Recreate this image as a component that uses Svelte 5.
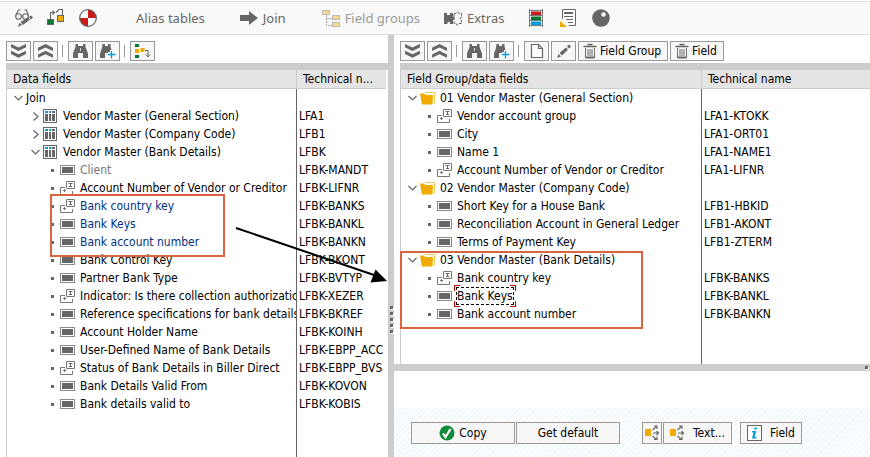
<script>
  const left = [
    { level: 0, kind: 'root', open: true, text: 'Join', tech: '' },
    { level: 1, kind: 'table', open: false, text: 'Vendor Master (General Section)', tech: 'LFA1' },
    { level: 1, kind: 'table', open: false, text: 'Vendor Master (Company Code)', tech: 'LFB1' },
    { level: 1, kind: 'table', open: true, text: 'Vendor Master (Bank Details)', tech: 'LFBK' },
    { level: 2, kind: 'field', text: 'Client', tech: 'LFBK-MANDT', tone: 'muted' },
    { level: 2, kind: 'texted', text: 'Account Number of Vendor or Creditor', tech: 'LFBK-LIFNR' },
    { level: 2, kind: 'texted', text: 'Bank country key', tech: 'LFBK-BANKS', tone: 'used' },
    { level: 2, kind: 'field', text: 'Bank Keys', tech: 'LFBK-BANKL', tone: 'used' },
    { level: 2, kind: 'field', text: 'Bank account number', tech: 'LFBK-BANKN', tone: 'used' },
    { level: 2, kind: 'field', text: 'Bank Control Key', tech: 'LFBK-BKONT' },
    { level: 2, kind: 'field', text: 'Partner Bank Type', tech: 'LFBK-BVTYP' },
    { level: 2, kind: 'texted', text: 'Indicator: Is there collection authorization', tech: 'LFBK-XEZER' },
    { level: 2, kind: 'field', text: 'Reference specifications for bank details', tech: 'LFBK-BKREF' },
    { level: 2, kind: 'field', text: 'Account Holder Name', tech: 'LFBK-KOINH' },
    { level: 2, kind: 'field', text: 'User-Defined Name of Bank Details', tech: 'LFBK-EBPP_ACC' },
    { level: 2, kind: 'texted', text: 'Status of Bank Details in Biller Direct', tech: 'LFBK-EBPP_BVS' },
    { level: 2, kind: 'field', text: 'Bank Details Valid From', tech: 'LFBK-KOVON' },
    { level: 2, kind: 'field', text: 'Bank details valid to', tech: 'LFBK-KOBIS' }
  ];

  const right = [
    { level: 0, kind: 'folder', open: true, text: '01 Vendor Master (General Section)', tech: '' },
    { level: 1, kind: 'texted', text: 'Vendor account group', tech: 'LFA1-KTOKK' },
    { level: 1, kind: 'field', text: 'City', tech: 'LFA1-ORT01' },
    { level: 1, kind: 'field', text: 'Name 1', tech: 'LFA1-NAME1' },
    { level: 1, kind: 'texted', text: 'Account Number of Vendor or Creditor', tech: 'LFA1-LIFNR' },
    { level: 0, kind: 'folder', open: true, text: '02 Vendor Master (Company Code)', tech: '' },
    { level: 1, kind: 'field', text: 'Short Key for a House Bank', tech: 'LFB1-HBKID' },
    { level: 1, kind: 'field', text: 'Reconciliation Account in General Ledger', tech: 'LFB1-AKONT' },
    { level: 1, kind: 'field', text: 'Terms of Payment Key', tech: 'LFB1-ZTERM' },
    { level: 0, kind: 'folder', open: true, text: '03 Vendor Master (Bank Details)', tech: '' },
    { level: 1, kind: 'texted', text: 'Bank country key', tech: 'LFBK-BANKS' },
    { level: 1, kind: 'field', text: 'Bank Keys', tech: 'LFBK-BANKL', focused: true },
    { level: 1, kind: 'field', text: 'Bank account number', tech: 'LFBK-BANKN' }
  ];
</script>

{#snippet expandIcon()}
  <svg width="17" height="14" viewBox="0 0 17 14"><path d="M1 0l7.5 3.5L16 0v3.2L8.500 7 1 3.200zM1 6.800l7.500 3.500L16 6.800V10l-7.500 3.800L1 10z" fill="#666" /></svg>
{/snippet}

{#snippet collapseIcon()}
  <svg width="17" height="14" viewBox="0 0 17 14"><path d="M1 7l7.5-3.500L16 7V3.800L8.500 0 1 3.800zM1 13.800l7.500-3.500 7.500 3.500v-3.200L8.500 6.800 1 10.600z" fill="#666" /></svg>
{/snippet}

{#snippet findIcon(plus)}
  <svg width="17" height="16" viewBox="0 0 17 16">
    {#if plus}
      <path d="M3.500 1H6v2h3V1h2.500v2.500L12.500 7H11v2H9v1H6v5H1v-4.500L3 5z" fill="#666" />
      <path d="M12.500 8v7.500M9 11.500h7.500" stroke="#009de0" stroke-width="1.300" />
    {:else}
      <path d="M3.500 1H6v2h5V1h2.500v3L16 10.500V15h-5v-5H6v5H1v-4.500L3.500 4z" fill="#666" />
      <path d="M8.500 5v3" stroke="#ddd" />
    {/if}
  </svg>
{/snippet}

{#snippet trashIcon()}
  <svg width="14" height="16" viewBox="0 0 14 16"><path d="M4.500 1.500h5M.5 3.500h13" stroke="#666" stroke-width="1.500" /><path d="M2.500 5v9.500h9V5M5 6v7M7 6v7M9 6v7" fill="none" stroke="#777" stroke-width="1.100" /><path d="M3 13.500h8v2H3z" fill="#666" /></svg>
{/snippet}

{#snippet spreadIcon()}
  <svg width="15" height="16" viewBox="0 0 15 16"><path d="M0 4h6v7H0z" fill="#f0ab00" /><path d="M7.500 5l4-3.500M9 1h3v3M8 8h5.500M11.500 6l2 2-2 2M7.500 11l4 3.500M12 11.500v3H9" fill="none" stroke="#666" stroke-width="1.100" /></svg>
{/snippet}

{#snippet nodeIcon(kind)}
  {#if kind === 'folder'}
    <svg width="16" height="14" viewBox="0 0 16 14"><path d="M5 1.500h9.500v11" fill="none" stroke="#f4c657" /><path d="M0 2.500h4L5.500 4H13l-.5 9.500H2z" fill="#f0ab00" /></svg>
  {:else if kind === 'table'}
    <svg width="15" height="14" viewBox="0 0 15 14"><rect x=".5" y=".5" width="13" height="13" fill="#fff" stroke="#666" /><path d="M2 2h3v2H2zM6 2h2v2H6z" fill="#009de0" /><path d="M9 2h3v2H9zM2 5h3v7H2zM6 5h2v7H6zM9 5h3v7H9z" fill="#666" /></svg>
  {:else if kind === 'texted'}
    <svg width="15" height="14" viewBox="0 0 15 14"><path d="M6.500 7.500V.5h8v7z" fill="#fff" stroke="#777" /><path d="M8.500 2.500h4M10.500 2.500v3M9 5.500h3" fill="none" stroke="#666" /><path d="M5 6.500H.5v7h12V10M3 9.500h3M4.500 8v3" fill="none" stroke="#777" /></svg>
  {:else if kind === 'field'}
    <svg width="15" height="10" viewBox="0 0 15 10"><rect x=".5" y=".5" width="14" height="9" fill="#fff" stroke="#888" /><path d="M2 2h11v6H2z" fill="#666" /></svg>
  {/if}
{/snippet}

{#snippet tree(rows, firstHead, secondHead, side)}
  <table class={side}>
    <thead>
      <tr><th class="name">{firstHead}</th><th class="tech">{secondHead}</th></tr>
    </thead>
    <tbody>
      {#each rows as row}
        <tr>
          <td class="name" class:current={row.focused}>
            <div class="node level{row.level} {row.tone ?? ''}">
              {#if row.open !== undefined}
                <svg class="twist" width="9" height="9" viewBox="0 0 9 9"><path d={row.open ? 'M.5 2L4.500 6 8.500 2' : 'M2.500.5L7 4.500 2.500 8.500'} fill="none" stroke="#666" stroke-width="1.200" /></svg>
              {:else}
                <i class="leaf"></i>
              {/if}
              {#if row.kind !== 'root'}
                <span class="pic">{@render nodeIcon(row.kind)}</span>
              {/if}
              <span class="label" class:focused={row.focused}>{row.text}</span>
            </div>
          </td>
          <td class="tech">{row.tech}</td>
        </tr>
      {/each}
      <tr class="rest"><td class="name"></td><td class="tech"></td></tr>
    </tbody>
  </table>
{/snippet}

<div class="app">
  <nav class="menu">
    <div class="icons">
      <button aria-label="Display or change">
        <svg width="20" height="20" viewBox="0 0 20 20"><g fill="none" stroke="#666" stroke-width="1.100"><circle cx="4.500" cy="8.500" r="2.800" /><circle cx="11.500" cy="8.500" r="2.800" /><path d="M7.300 8h1.400M1.700 7.500L4.500 2h2M14.300 7.500L12.500 2h-2" /></g><path d="M4 19l1.500-4.500L8 17zM6.500 14l7.500-4.500 2 2L9 17zM15 9l2-1.500 2 2-2 2z" fill="#666" /></svg>
      </button>
      <button aria-label="Other object">
        <svg width="20" height="20" viewBox="0 0 20 20"><path d="M4.500 11V4.500H8M6.500 2.500l2 2-2 2M10 4.500l3-3M13 1.500h3.500V7" fill="none" stroke="#666" stroke-width="1.100" /><rect x="1.500" y="11.500" width="6" height="5" fill="#007833" stroke="#666" /><rect x="11.500" y="7.500" width="6" height="6" fill="#f0ab00" stroke="#666" /></svg>
      </button>
      <button aria-label="Generate">
        <svg width="20" height="20" viewBox="0 0 20 20"><circle cx="10" cy="10" r="8.500" fill="#fff" /><path d="M10 10V1.500A8.500 8.500 0 0 1 18.500 10zM10 10v8.500A8.500 8.500 0 0 1 1.500 10z" fill="#cc1919" /><circle cx="10" cy="10" r="8.300" fill="none" stroke="#666" stroke-width="1.200" /></svg>
      </button>
    </div>
    <button class="alias">Alias tables</button>
    <button class="join"><svg width="18" height="14" viewBox="0 0 18 14"><path d="M0 4h9V0l9 7-9 7v-4H0z" fill="#666" /></svg>Join</button>
    <button class="groups" disabled>
      <svg width="18" height="18" viewBox="0 0 18 18"><path d="M4.500 6v10.500h6M5 9.500h5" fill="none" stroke="#aaa" stroke-dasharray="2 1" /><g fill="#f8d88c" stroke="#bbb"><rect x=".5" y="1.500" width="7" height="4" /><rect x="10.500" y="6.500" width="7" height="4" /><rect x="10.500" y="13.500" width="7" height="4" /></g></svg>Field groups
    </button>
    <button class="extras">
      <svg width="18" height="18" viewBox="0 0 18 18"><path d="M0 4h3v2h3V4h3v4h1.500v3H9v4H6v-2H3.500v2H0z" fill="#666" /><path d="M10 4.500h2a1.500 1.500 0 1 1 3 0h2.500v4a1.500 1.500 0 1 0 0 3v3H15a1.500 1.500 0 1 1-3 0h-2v-3M10 8V4" fill="none" stroke="#666" stroke-dasharray="3 1" /></svg>Extras
    </button>
    <div class="icons tail">
      <button aria-label="List">
        <svg width="16" height="18" viewBox="0 0 16 18"><path d="M1.500 0v18M14.500 0v18M1 1.500h14M1 6.500h14M1 11.500h14M1 16.500h14" stroke="#777" /><path d="M3 2.500h10V6H3z" fill="#cc1919" /><path d="M3 7.500h10V11H3z" fill="#007833" /><path d="M3 12.500h10V16H3z" fill="#009de0" /></svg>
      </button>
      <button aria-label="Assignment">
        <svg width="16" height="18" viewBox="0 0 16 18"><path d="M2.500 10V.5h13v16H9" fill="#fff" stroke="#666" /><path d="M4 3h9v2H4zM4 7h9v1H4zM6 10h7v1H6zM8 13h5v1H8z" fill="#666" /><path d="M0 12v6h7z" fill="#f0ab00" /></svg>
      </button>
      <button aria-label="Status">
        <svg width="18" height="18" viewBox="0 0 18 18"><circle cx="9" cy="9" r="8.800" fill="#666" /><circle cx="11.500" cy="5.500" r="2.300" fill="#f9f9f9" /></svg>
      </button>
    </div>
  </nav>

  <main>
    <section class="pane">
      <div class="tools">
        <button aria-label="Expand">{@render expandIcon()}</button>
        <button aria-label="Collapse">{@render collapseIcon()}</button>
        <i class="sep"></i>
        <button aria-label="Find">{@render findIcon(false)}</button>
        <button aria-label="Find next">{@render findIcon(true)}</button>
        <i class="sep"></i>
        <button aria-label="Assign fields">
          <svg width="17" height="16" viewBox="0 0 17 16"><path d="M1 1h4v3H1zM1 12h4v3H1z" fill="#007833" /><path d="M1 6h4v4H1zM6.500 5h4v4h-4z" fill="#f0ab00" /><path d="M11 7.500h3V14M11.500 11.500L14 14l2-2.500" fill="none" stroke="#666" /></svg>
        </button>
      </div>
      <div class="tree">{@render tree(left, 'Data fields', 'Technical n...', 'left')}</div>
    </section>

    <div class="splitter"><i></i><i></i><i></i><i></i><i></i></div>

    <section class="pane wide">
      <div class="tools">
        <button aria-label="Expand">{@render expandIcon()}</button>
        <button aria-label="Collapse">{@render collapseIcon()}</button>
        <i class="sep"></i>
        <button aria-label="Find">{@render findIcon(false)}</button>
        <button aria-label="Find next">{@render findIcon(true)}</button>
        <i class="sep"></i>
        <button aria-label="Create">
          <svg width="14" height="16" viewBox="0 0 14 16"><path d="M1.500 1.500h7l4 4v9h-11zM8.500 1.500v4h4" fill="#fff" stroke="#666" stroke-width="1.200" /></svg>
        </button>
        <button aria-label="Change">
          <svg width="16" height="16" viewBox="0 0 16 16"><path d="M1 15l1.500-4L5 13.500zM3.500 10L10 4.500 12 6.500 6 12.500zM11 3.500L13 1.500 15 3.500 13 5.500z" fill="#666" /></svg>
        </button>
        <button class="labelled">{@render trashIcon()}Field Group</button>
        <button class="labelled">{@render trashIcon()}Field</button>
      </div>
      <div class="tree">{@render tree(right, 'Field Group/data fields', 'Technical name', 'right')}</div>
      <div class="bar"><i></i></div>
      <div class="blank"></div>
      <footer>
        <button class="big">
          <svg width="16" height="16" viewBox="0 0 16 16"><circle cx="8" cy="8" r="7.500" fill="#118a3c" /><path d="M4 8.500l2.500 3.500 5-8" fill="none" stroke="#fff" stroke-width="2.200" /></svg>Copy
        </button>
        <button class="big">Get default</button>
        <button class="small" aria-label="Texts">{@render spreadIcon()}</button>
        <button class="text">{@render spreadIcon()}Text...</button>
        <button class="info">
          <svg width="15" height="16" viewBox="0 0 15 16"><rect x=".5" y=".5" width="14" height="15" fill="#fff" stroke="#666" /><path d="M7.500 2.500h2.500l-.5 2H7zM5 6h4.200l-1.500 6H9.500l-.5 1.500H5l1.500-6H5z" fill="#009de0" /></svg>Field
        </button>
      </footer>
    </section>

    <div class="mark source"></div>
    <div class="mark target"></div>
    <svg class="arrow" width="153" height="62" viewBox="0 0 153 62"><path d="M1 3l138 47" stroke="#000" stroke-width="2" /><path d="M152 56l-16.500 1.500 5-13z" fill="#000" /></svg>
  </main>
</div>

<style>
  :global(body) {
    margin: 0;
    background: #fff;
  }
  .app {
    display: flex;
    flex-direction: column;
    height: 100vh;
    overflow: hidden;
    box-sizing: border-box;
    padding-top: 1px;
    font: 12px/18px "DejaVu Sans Condensed", "DejaVu Sans", sans-serif;
    color: #000;
  }
  svg {
    display: block;
    flex: none;
  }
  button {
    font: inherit;
    color: inherit;
    display: flex;
    align-items: center;
    justify-content: center;
    box-sizing: border-box;
    padding: 0;
    white-space: nowrap;
  }

  .menu {
    display: flex;
    align-items: center;
    flex: none;
    height: 32px;
    padding-left: 14px;
    border-top: 1px solid #ddd;
    border-bottom: 1px solid #ddd;
    background: #f9f9f9;
    font-family: "Noto Sans", sans-serif;
    font-size: 13px;
    color: #666;
  }
  .menu button {
    border: 0;
    background: none;
    gap: 5px;
  }
  .icons {
    display: flex;
    gap: 12px;
  }
  .alias { margin-left: 38px; }
  .join { margin-left: 35px; }
  .groups { margin-left: 36px; }
  .menu .groups { color: #999; }
  .extras { margin-left: 24px; }
  .tail {
    gap: 16px;
    margin-left: 24px;
  }

  main {
    position: relative;
    display: flex;
    flex: 1;
    min-height: 0;
  }
  .pane {
    display: flex;
    flex-direction: column;
    flex: 0 0 388px;
    min-width: 0;
  }
  .pane.wide { flex: 1; }

  .tools {
    display: flex;
    align-items: center;
    flex: none;
    gap: 2px;
    height: 20px;
    padding: 6px 0 2px 6px;
  }
  .tools button,
  footer button {
    border: 1px solid #999;
    background: #f7f7f7;
  }
  .tools button {
    width: 25px;
    height: 20px;
  }
  .tools .labelled {
    width: auto;
    padding: 0 6px 0 4px;
    gap: 3px;
  }
  .sep {
    width: 1px;
    height: 12px;
    margin: 0 3px 0 2px;
    background: #999;
  }

  .tree {
    flex: 1;
    min-height: 0;
    margin-left: 6px;
    border-top: 7px solid #ccc;
    overflow: hidden;
  }
  table {
    width: 100%;
    height: 100%;
    table-layout: fixed;
    border-collapse: separate;
    border-spacing: 0;
    border-left: 1px solid #ccc;
  }
  table.left { border-right: 2px solid #fff; }
  th,
  td {
    box-sizing: border-box;
    padding: 0;
    height: 18px;
    text-align: left;
    font-weight: normal;
    white-space: nowrap;
    overflow: hidden;
  }
  th {
    height: 19px;
    padding-left: 6px;
    background: #e4e4e4;
    border-bottom: 1px solid #ccc;
  }
  th.name { border-right: 1px solid #ccc; }
  td.name { border-right: 1px solid #666; }
  td.tech { padding-left: 2px; }
  td.current { overflow: visible; }
  .left .name { width: 290px; }
  .right .name { width: 301px; }
  .rest td { height: auto; }

  .node {
    display: flex;
    align-items: center;
    height: 18px;
  }
  .twist { margin-right: 3px; }
  .leaf {
    flex: none;
    width: 3px;
    height: 3px;
    margin-right: 6px;
    background: #666;
  }
  .pic {
    display: flex;
    flex: none;
    width: 16px;
    margin-right: 4px;
  }
  .left .level0 { padding-left: 7px; }
  .left .level1 { padding-left: 24px; }
  .left .level2 { padding-left: 44px; }
  .right .level0 { padding-left: 7px; }
  .right .level1 { padding-left: 27px; }
  .muted { color: #777; }
  .used { color: #003283; }
  .label.focused {
    position: relative;
    line-height: 16px;
    outline: 1px dashed #000;
  }
  .label.focused::before {
    content: "";
    position: absolute;
    inset: -3px;
    background:
      linear-gradient(#c00, #c00) 0 0 / 6px 1px,
      linear-gradient(#c00, #c00) 0 0 / 1px 6px,
      linear-gradient(#c00, #c00) 100% 0 / 6px 1px,
      linear-gradient(#c00, #c00) 100% 0 / 1px 6px,
      linear-gradient(#c00, #c00) 0 100% / 6px 1px,
      linear-gradient(#c00, #c00) 0 100% / 1px 6px,
      linear-gradient(#c00, #c00) 100% 100% / 6px 1px,
      linear-gradient(#c00, #c00) 100% 100% / 1px 6px;
    background-repeat: no-repeat;
  }

  .splitter {
    display: flex;
    flex-direction: column;
    align-items: center;
    justify-content: center;
    gap: 3px;
    flex: 0 0 6px;
    padding-top: 146px;
    background: #ccc;
  }
  .splitter i,
  .bar i {
    width: 3px;
    height: 3px;
    background: #666;
    box-shadow: 1px 1px #fff;
  }
  .bar {
    display: flex;
    align-items: center;
    justify-content: flex-end;
    flex: none;
    height: 7px;
    padding-right: 2px;
    background: #ccc;
  }
  .blank {
    flex: none;
    height: 37px;
  }
  footer {
    display: flex;
    flex: none;
    gap: 1px;
    padding: 14px 17px 13px;
    background: repeating-linear-gradient(135deg, #f3f8fc 0 2px, #fcfdff 2px 4px);
  }
  footer button { height: 22px; }
  .big {
    width: 104px;
    gap: 4px;
  }
  .small {
    width: 20px;
    margin-left: 21px;
  }
  .text {
    width: 69px;
    gap: 8px;
  }
  .info {
    width: 62px;
    gap: 8px;
    margin-left: 7px;
  }

  .mark {
    position: absolute;
    box-sizing: border-box;
    border: 2px solid #d9643f;
  }
  .source {
    left: 50px;
    top: 159px;
    width: 175px;
    height: 63px;
  }
  .target {
    left: 400px;
    top: 216px;
    width: 243px;
    height: 78px;
  }
  .arrow {
    position: absolute;
    left: 235px;
    top: 190px;
  }
</style>
